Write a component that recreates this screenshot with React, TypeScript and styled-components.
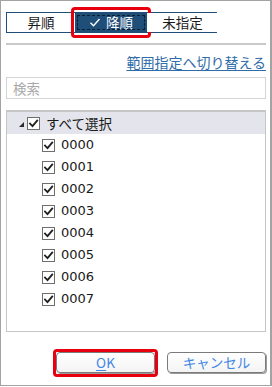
import React from "react";
import styled, { createGlobalStyle } from "styled-components";

const GlobalStyle = createGlobalStyle`
  html, body {
    margin: 0;
    padding: 0;
    background: #ffffff;
  }
  body {
    font-family: "DejaVu Sans", "Noto Sans CJK JP", sans-serif;
    font-size: 13px;
    color: #1a1a1a;
  }
`;

const Panel = styled.div`
  box-sizing: border-box;
  width: 272px;
  height: 386px;
  border: 1px solid #a3a3a3;
  border-right-width: 2px;
  padding: 11px 4px 0 5px;
  display: flex;
  flex-direction: column;
  background: #ffffff;
`;

const SortGroup = styled.div`
  display: grid;
  grid-template-columns: 68px 72px 71px;
  width: 211px;
  height: 21px;
  box-sizing: border-box;
  border: 1px solid #1f4e79;
`;

const SortButton = styled.div<{ $active?: boolean; $marked?: boolean }>`
  position: relative;
  display: flex;
  align-items: center;
  justify-content: center;
  gap: 5px;
  font-family: "Noto Sans CJK JP", sans-serif;
  font-size: 13.5px;
  line-height: 19px;
  color: ${(p) => (p.$active ? "#ffffff" : "#1a1a1a")};
  background: ${(p) => (p.$active ? "#1f4e79" : "#ffffff")};

  ${(p) =>
    p.$active &&
    `
    &::before {
      content: "";
      position: absolute;
      inset: 2px;
      border: 1px dashed #0a1e33;
      pointer-events: none;
    }
  `}

  ${(p) =>
    p.$marked &&
    `
    &::after {
      content: "";
      position: absolute;
      left: -4px;
      right: -4px;
      top: -6px;
      bottom: -6px;
      border: 3px solid #e8000f;
      border-radius: 4px;
      pointer-events: none;
    }
  `}
`;

const Separator = styled.div`
  height: 2px;
  margin-top: 10px;
  background: #c9c9c9;
`;

const LinkRow = styled.div`
  display: flex;
  justify-content: flex-end;
  margin-top: 7px;
  height: 20px;
`;

const SwitchLink = styled.a`
  font-family: "Noto Sans CJK JP", sans-serif;
  font-size: 14px;
  line-height: 20px;
  color: #2f6ca8;
  text-decoration: underline;
  text-underline-offset: 2px;
  cursor: pointer;
`;

const SearchBox = styled.input`
  box-sizing: border-box;
  margin-top: 5px;
  height: 22px;
  width: 100%;
  border: 1px solid #d4d4d4;
  padding: 0 6px;
  font-family: "Noto Sans CJK JP", sans-serif;
  font-size: 13.5px;
  outline: none;
  &::placeholder {
    color: #a9a9a9;
  }
`;

const ListBox = styled.div`
  box-sizing: border-box;
  margin-top: 11px;
  height: 222px;
  border: 1px solid #c6c6c6;
  border-top-width: 2px;
  display: flex;
  flex-direction: column;
`;

const Row = styled.div<{ $level: number; $highlight?: boolean }>`
  display: flex;
  align-items: center;
  height: 22px;
  flex: none;
  padding-left: ${(p) => (p.$level === 0 ? 12 : 35)}px;
  background: ${(p) => (p.$highlight ? "#e4e4ec" : "transparent")};
`;

const Expander = styled.span`
  width: 0;
  height: 0;
  border-left: 5px solid transparent;
  border-bottom: 5px solid #2a2a2a;
  margin-right: 3px;
  margin-top: 2px;
`;

const Box = styled.span`
  box-sizing: border-box;
  width: 13px;
  height: 13px;
  border: 1px solid #6e6e6e;
  background: #ffffff;
  display: flex;
  align-items: center;
  justify-content: center;
  margin-right: 6px;
  flex: none;
`;

const Label = styled.span<{ $jp?: boolean }>`
  font-family: ${(p) =>
    p.$jp ? `"Noto Sans CJK JP", sans-serif` : `"DejaVu Sans", sans-serif`};
  font-size: ${(p) => (p.$jp ? "13.5px" : "13px")};
  color: #1a1a1a;
  line-height: 20px;
`;

const Footer = styled.div`
  display: flex;
  justify-content: flex-end;
  gap: 12px;
  margin-top: 20px;
`;

const ActionButton = styled.button<{ $marked?: boolean }>`
  position: relative;
  box-sizing: border-box;
  width: 99px;
  height: 21px;
  border: 1px solid #7a7a7a;
  border-radius: 4px;
  background: linear-gradient(#ffffff, #f4f4f4);
  box-shadow: 1px 1px 0 #9a9a9a;
  font-family: "Noto Sans CJK JP", sans-serif;
  font-size: 13.5px;
  line-height: 17px;
  color: #3f86e6;
  padding: 0;
  cursor: pointer;

  u {
    text-underline-offset: 2px;
  }

  ${(p) =>
    p.$marked &&
    `
    &::after {
      content: "";
      position: absolute;
      left: -4px;
      right: -4px;
      top: -4px;
      bottom: -5px;
      border: 3px solid #e8000f;
      border-radius: 4px;
      pointer-events: none;
    }
  `}
`;

const Tick = ({ color = "#1f1f1f" }: { color?: string }) => (
  <svg width="11" height="11" viewBox="0 0 11 11">
    <path
      d="M2 5.6 L4.5 8.2 L9.2 2.6"
      fill="none"
      stroke={color}
      strokeWidth="1.8"
      strokeLinecap="square"
    />
  </svg>
);

const items = ["0000", "0001", "0002", "0003", "0004", "0005", "0006", "0007"];

export default function App() {
  return (
    <>
      <GlobalStyle />
      <Panel>
        <SortGroup>
          <SortButton>昇順</SortButton>
          <SortButton $active $marked>
            <svg width="12" height="11" viewBox="0 0 12 11">
              <path
                d="M1.5 5.8 L4.5 8.8 L10.5 2"
                fill="none"
                stroke="#ffffff"
                strokeWidth="1.4"
              />
            </svg>
            降順
          </SortButton>
          <SortButton>未指定</SortButton>
        </SortGroup>
        <Separator />
        <LinkRow>
          <SwitchLink>範囲指定へ切り替える</SwitchLink>
        </LinkRow>
        <SearchBox placeholder="検索" />
        <ListBox>
          <Row $level={0} $highlight>
            <Expander />
            <Box>
              <Tick />
            </Box>
            <Label $jp>すべて選択</Label>
          </Row>
          {items.map((code) => (
            <Row key={code} $level={1}>
              <Box>
                <Tick />
              </Box>
              <Label>{code}</Label>
            </Row>
          ))}
        </ListBox>
        <Footer>
          <ActionButton $marked>
            <u>O</u>K
          </ActionButton>
          <ActionButton>キャンセル</ActionButton>
        </Footer>
      </Panel>
    </>
  );
}
